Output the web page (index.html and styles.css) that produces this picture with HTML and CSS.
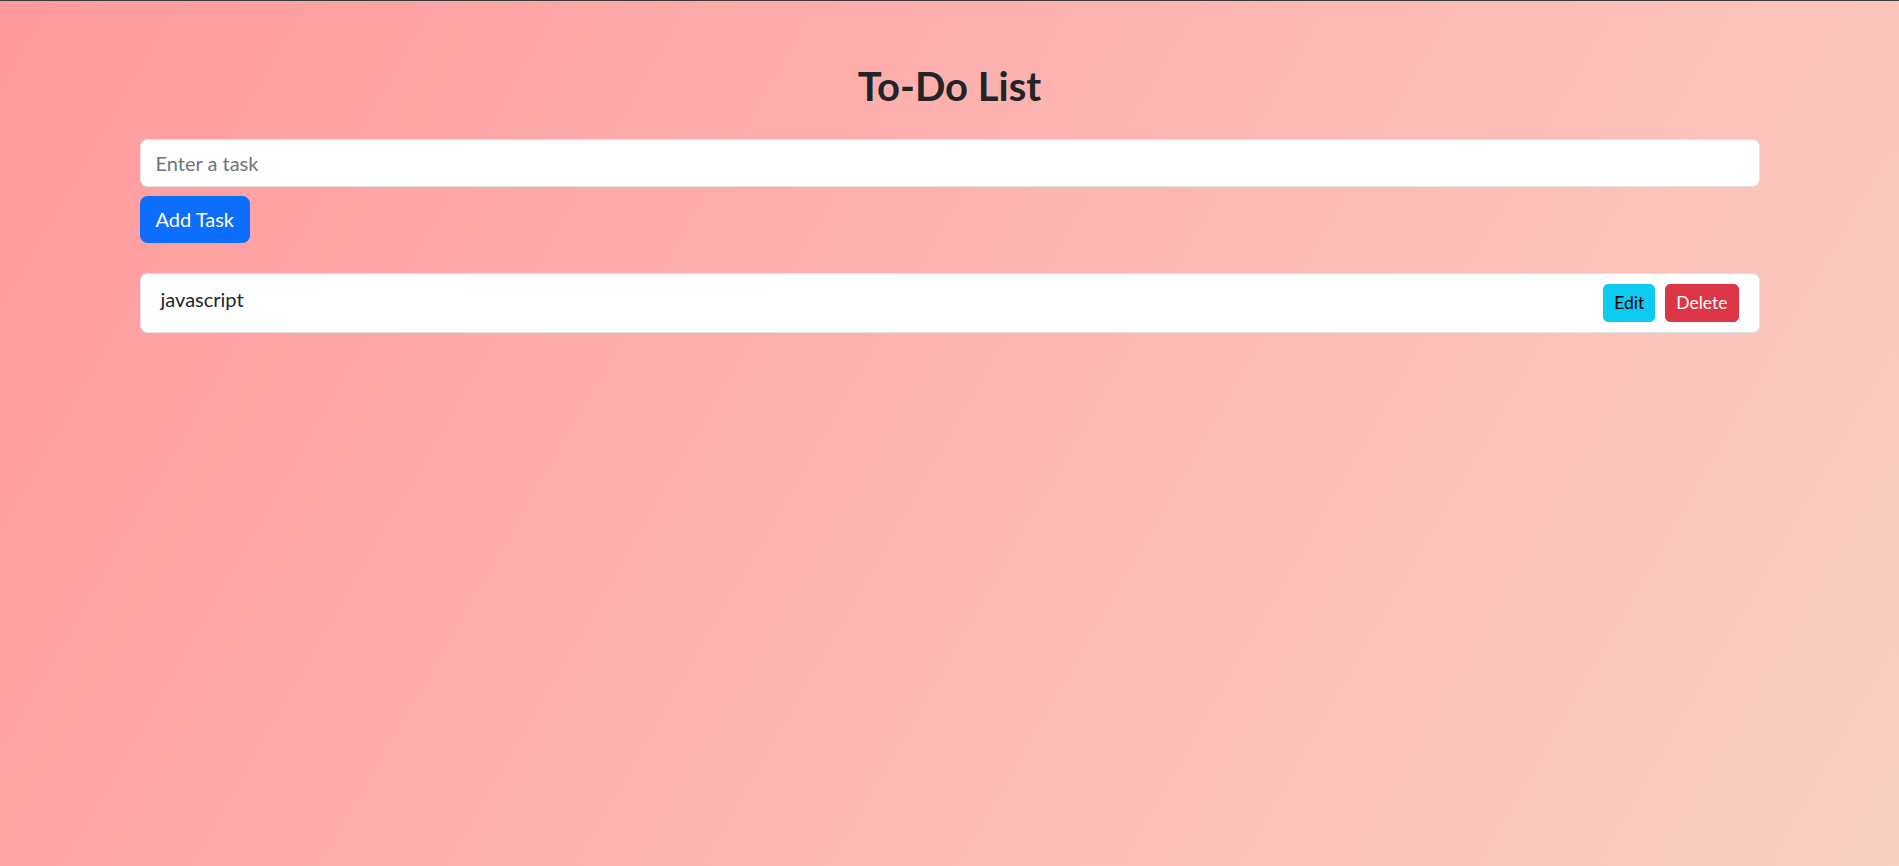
FILE: index.html
```html
<!DOCTYPE html>
<html lang="en">
<head>
<meta charset="utf-8">
<title>To-Do List</title>
<link rel="stylesheet" href="styles.css">
</head>
<body>
<div class="container">
  <h1 class="title">To-Do List</h1>
  <input class="task-input" type="text" placeholder="Enter a task">
  <button class="btn btn-primary">Add Task</button>
  <ul class="task-list">
    <li class="task-item">
      <span class="task-text">javascript</span>
      <span class="task-actions">
        <button class="btn btn-sm btn-info">Edit</button>
        <button class="btn btn-sm btn-danger">Delete</button>
      </span>
    </li>
  </ul>
</div>
</body>
</html>
```
FILE: styles.css
```css
html {
  height: 100%;
  background: linear-gradient(120deg, #ff9a9e 0%, #fad0c4 100%);
  box-shadow: inset 0 1px 0 #3a3a3a;
}
body {
  margin: 0;
  font-family: Lato, "Open Sans", sans-serif;
  font-size: 20px;
  line-height: 1.5;
  color: #212529;
}
.container {
  max-width: 1620px;
  margin: 0 auto;
  padding: 62px 15px 0;
}
.title {
  margin: 0 0 29px;
  font-size: 40px;
  line-height: 1.2;
  font-weight: 700;
  text-align: center;
  color: #212529;
}
.task-input {
  display: block;
  box-sizing: border-box;
  width: 100%;
  height: 47.5px;
  margin: 0 0 9px;
  padding: 7.5px 15px;
  font: inherit;
  color: #212529;
  background: #fff;
  border: 1px solid #dee2e6;
  border-radius: 7.5px;
  outline: none;
}
.task-input::placeholder {
  color: #6c757d;
}
.btn {
  display: inline-block;
  padding: 7.5px 15px;
  font: inherit;
  line-height: 1.5;
  border: 1px solid transparent;
  border-radius: 7.5px;
  cursor: pointer;
}
.btn-primary {
  background: #0d6efd;
  border-color: #0d6efd;
  color: #fff;
}
.btn-sm {
  padding: 5px 10px;
  font-size: 17.5px;
  font-weight: 400;
  border-radius: 5px;
}
.btn-info {
  background: #0dcaf0;
  border-color: #0dcaf0;
  color: #000;
}
.btn-danger {
  background: #dc3545;
  border-color: #dc3545;
  color: #fff;
}
.task-list {
  list-style: none;
  margin: 30px 0 0;
  padding: 0;
}
.task-item {
  display: flex;
  justify-content: space-between;
  align-items: center;
  padding: 10px 20px;
  background: #fff;
  border: 1px solid #dee2e6;
  border-radius: 7.5px;
}
.task-text {
  align-self: flex-start;
}
.task-actions {
  display: flex;
  gap: 10px;
}
```
